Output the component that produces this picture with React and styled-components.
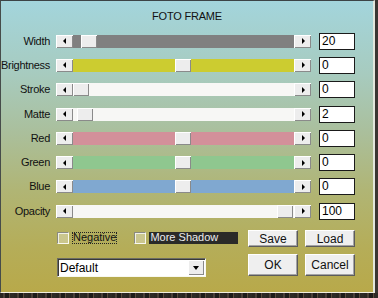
import React from 'react';
import styled, { createGlobalStyle } from 'styled-components';

const Global = createGlobalStyle`
  html, body { margin: 0; padding: 0; background: #302c28; }
  body {
    width: 378px; height: 298px; overflow: hidden;
    font-family: "Liberation Sans", Arial, sans-serif;
    font-size: 11px; color: #111;
  }
`;

const Screen = styled.div`
  width: 378px;
  height: 298px;
  display: flex;
  flex-direction: column;
  background: #3a3632;
`;

const Window = styled.div`
  box-sizing: border-box;
  width: 375px;
  height: 293px;
  border-top: 1px solid #3c4446;
  border-left: 1px solid #464c4a;
  border-right: 2px solid #e2e6dc;
  border-bottom: 1px solid #f2f0e0;
  background: linear-gradient(
    180deg,
    #a3d5dc 0%,
    #a7cbbf 25%,
    #aabf9c 45%,
    #b0b575 65%,
    #b5ad58 85%,
    #b8a94a 100%
  );
  display: flex;
  flex-direction: column;
`;

const Strip = styled.div`
  height: 5px;
  width: 378px;
  background:
    repeating-linear-gradient(90deg, #2a2622 0 3px, #4a3f38 3px 5px, #1e1c1a 5px 9px, #5a4a3c 9px 10px, #2e2a26 10px 14px),
    #2a2622;
`;

const Title = styled.div`
  padding-top: 8px;
  line-height: 14px;
  text-align: center;
  font-size: 11px;
  letter-spacing: -0.2px;
  color: #111;
`;

const Grid = styled.div`
  margin-top: 6px;
  display: grid;
  grid-template-columns: 55px 255px 44px;
  grid-auto-rows: 24.3px;
  align-items: center;
`;

const Label = styled.div`
  display: flex;
  justify-content: flex-end;
  padding-right: 6px;
  white-space: nowrap;
  line-height: 13px;
  letter-spacing: -0.3px;
`;

const ScrollBar = styled.div`
  display: flex;
  height: 13px;
  width: 255px;
`;

const bevel = `
  box-sizing: border-box;
  background: #ededed;
  box-shadow: inset 1px 1px #ffffff, inset -1px -1px #8a8a8a;
`;

const ArrowButton = styled.div`
  ${bevel}
  width: 17px;
  height: 13px;
  display: flex;
  align-items: center;
  justify-content: center;
  &::after {
    content: '';
    width: 0; height: 0;
    border-top: 3px solid transparent;
    border-bottom: 3px solid transparent;
    ${p => p.$dir === 'left'
      ? 'border-right: 3px solid #000; margin-right: 1px;'
      : 'border-left: 3px solid #000; margin-left: 1px;'}
  }
`;

const Track = styled.div`
  width: 221px;
  height: 13px;
  display: flex;
  background: ${p => p.$color};
`;

const Spacer = styled.div`
  flex: none;
`;

const Thumb = styled.div`
  ${bevel}
  width: 16px;
  height: 13px;
  flex: none;
`;

const ValueCell = styled.div`
  padding-left: 8px;
  display: flex;
  align-items: center;
`;

const ValueBox = styled.div`
  box-sizing: border-box;
  width: 36px;
  height: 17px;
  background: #fff;
  border: 1px solid #1a1a1a;
  padding-left: 2px;
  font-size: 12px;
  line-height: 15px;
  color: #000;
`;

const Bottom = styled.div`
  display: flex;
  padding-left: 56px;
`;

const LeftCol = styled.div`
  width: 191px;
  display: flex;
  flex-direction: column;
  padding-top: 9px;
`;

const CheckRow = styled.div`
  display: flex;
  align-items: center;
  height: 12px;
`;

const Check = styled.div`
  box-sizing: border-box;
  width: 12px;
  height: 12px;
  flex: none;
  border: 1px solid;
  border-color: #8a8a80 #f8f8f0 #f8f8f0 #8a8a80;
  box-shadow: inset 1px 1px #f0f0e6;
  background: rgba(255, 255, 255, 0.3);
  margin-left: ${p => p.$gap || 0}px;
`;

const CheckText = styled.span`
  box-sizing: border-box;
  height: 12px;
  line-height: 11px;
  margin-left: ${p => p.$gap}px;
  padding: 0 1px;
  white-space: nowrap;
  ${p => p.$focused && 'outline: 1px dotted #222; outline-offset: -1px;'}
  ${p => p.$dark && `
    width: 89px;
    background: #2a2a28;
    color: #ececec;
  `}
`;

const Select = styled.div`
  box-sizing: border-box;
  margin-top: 14px;
  width: 149px;
  height: 19px;
  display: flex;
  align-items: center;
  background: #fff;
  border: 1px solid;
  border-color: #6c6c64 #f8f8f0 #f8f8f0 #6c6c64;
  box-shadow: inset 1px 1px #3a3a36;
`;

const SelectText = styled.span`
  flex: 1;
  padding-left: 2px;
  font-size: 12px;
  color: #000;
`;

const SelectButton = styled.div`
  ${bevel}
  width: 16px;
  height: 15px;
  margin-right: 1px;
  display: flex;
  align-items: center;
  justify-content: center;
  &::after {
    content: '';
    width: 0; height: 0;
    border-left: 3.5px solid transparent;
    border-right: 3.5px solid transparent;
    border-top: 4px solid #000;
    margin-top: 1px;
  }
`;

const Buttons = styled.div`
  padding-top: 7px;
  display: grid;
  grid-template-columns: 50px 50px;
  grid-template-rows: 17px 22px;
  column-gap: 7px;
  row-gap: 7px;
`;

const Button = styled.div`
  box-sizing: border-box;
  display: flex;
  align-items: center;
  justify-content: center;
  background: #efefef;
  border: 1px solid;
  border-color: #ffffff #5c5c5c #5c5c5c #ffffff;
  box-shadow: inset -1px -1px #a4a4a4;
  font-size: 12px;
  color: #111;
`;

const rows = [
  { label: 'Width', color: '#808080', pos: 8, value: '20' },
  { label: 'Brightness', color: '#cccc30', pos: 102, value: '0' },
  { label: 'Stroke', color: '#f7f7f5', pos: 0, value: '0' },
  { label: 'Matte', color: '#f7f7f5', pos: 4, value: '2' },
  { label: 'Red', color: '#d3909a', pos: 102, value: '0' },
  { label: 'Green', color: '#8fc78f', pos: 102, value: '0' },
  { label: 'Blue', color: '#80a8d0', pos: 102, value: '0' },
  { label: 'Opacity', color: '#f7f7f5', pos: 204, value: '100' },
];

function SliderRow({ label, color, pos, value }) {
  return (
    <>
      <Label>{label}</Label>
      <ScrollBar>
        <ArrowButton $dir="left" />
        <Track $color={color}>
          <Spacer style={{ width: pos }} />
          <Thumb />
        </Track>
        <ArrowButton $dir="right" />
      </ScrollBar>
      <ValueCell>
        <ValueBox>{value}</ValueBox>
      </ValueCell>
    </>
  );
}

export default function App() {
  return (
    <>
      <Global />
      <Screen>
        <Window>
          <Title>FOTO FRAME</Title>
          <Grid>
            {rows.map(r => (
              <SliderRow key={r.label} {...r} />
            ))}
          </Grid>
          <Bottom>
            <LeftCol>
              <CheckRow>
                <Check />
                <CheckText $gap={3} $focused>Negative</CheckText>
                <Check $gap={17} />
                <CheckText $gap={3} $dark>More Shadow</CheckText>
              </CheckRow>
              <Select>
                <SelectText>Default</SelectText>
                <SelectButton />
              </Select>
            </LeftCol>
            <Buttons>
              <Button>Save</Button>
              <Button>Load</Button>
              <Button>OK</Button>
              <Button>Cancel</Button>
            </Buttons>
          </Bottom>
        </Window>
        <Strip />
      </Screen>
    </>
  );
}
